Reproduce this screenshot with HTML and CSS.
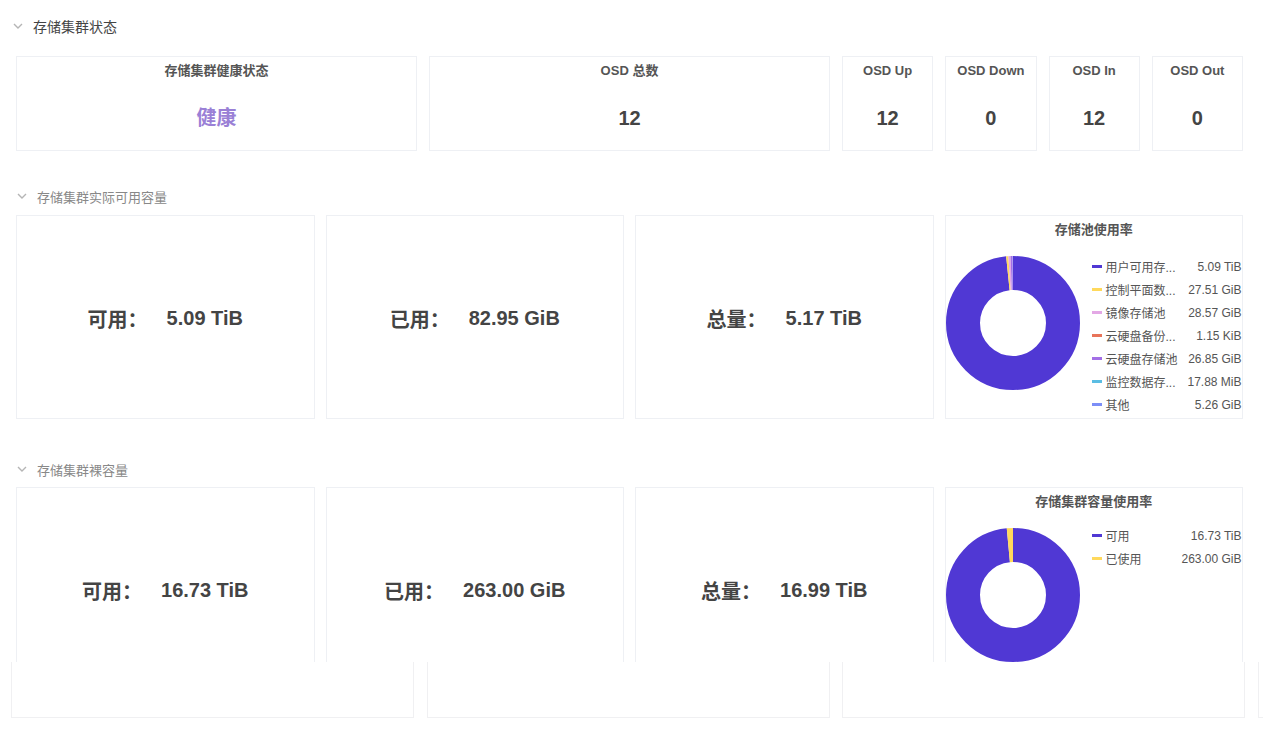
FILE: index.html
```html
<!DOCTYPE html>
<html lang="zh-CN">
<head>
    <meta charset="UTF-8">
    <meta name="viewport" content="width=device-width, initial-scale=1.0">
    <title>存储集群概览</title>
    <link rel="stylesheet" href="styles.css">
</head>
<body>
    <div class="page">
        <div class="section-title first">
            <svg class="chevron" width="10" height="6" viewBox="0 0 10 6"><polyline points="1,1 5,5 9,1" fill="none" stroke="#b5b5b5" stroke-width="1.4"/></svg>
            <span>存储集群状态</span>
        </div>
        <div class="status-row">
            <div class="card stat">
                <div class="stat-title">存储集群健康状态</div>
                <div class="stat-value health">健康</div>
            </div>
            <div class="card stat">
                <div class="stat-title">OSD 总数</div>
                <div class="stat-value">12</div>
            </div>
            <div class="card stat">
                <div class="stat-title">OSD Up</div>
                <div class="stat-value">12</div>
            </div>
            <div class="card stat">
                <div class="stat-title">OSD Down</div>
                <div class="stat-value">0</div>
            </div>
            <div class="card stat">
                <div class="stat-title">OSD In</div>
                <div class="stat-value">12</div>
            </div>
            <div class="card stat">
                <div class="stat-title">OSD Out</div>
                <div class="stat-value">0</div>
            </div>
        </div>

        <div class="section-title sub">
            <svg class="chevron" width="10" height="6" viewBox="0 0 10 6"><polyline points="1,1 5,5 9,1" fill="none" stroke="#b5b5b5" stroke-width="1.4"/></svg>
            <span>存储集群实际可用容量</span>
        </div>
        <div class="capacity-row">
            <div class="card capacity"><span class="cap-label">可用：</span><span class="cap-value">5.09 TiB</span></div>
            <div class="card capacity"><span class="cap-label">已用：</span><span class="cap-value">82.95 GiB</span></div>
            <div class="card capacity"><span class="cap-label">总量：</span><span class="cap-value">5.17 TiB</span></div>
            <div class="card chart">
                <div class="chart-title">存储池使用率</div>
                <div class="chart-body">
                    <svg class="donut" width="134" height="134" viewBox="0 0 134 134">
                        <g transform="rotate(-90 67 67)" fill="none" stroke-width="34">
                            <circle cx="67" cy="67" r="50" pathLength="100" stroke="#5038d4" stroke-dasharray="98.34 100"/>
                            <circle cx="67" cy="67" r="50" pathLength="100" stroke="#ffd95c" stroke-dasharray="0.52 100" stroke-dashoffset="-98.34"/>
                            <circle cx="67" cy="67" r="50" pathLength="100" stroke="#e3a8e5" stroke-dasharray="0.54 100" stroke-dashoffset="-98.86"/>
                            <circle cx="67" cy="67" r="50" pathLength="100" stroke="#a36fe6" stroke-dasharray="0.51 100" stroke-dashoffset="-99.40"/>
                            <circle cx="67" cy="67" r="50" pathLength="100" stroke="#7c8ef7" stroke-dasharray="0.09 100" stroke-dashoffset="-99.91"/>
                        </g>
                    </svg>
                    <ul class="legend">
                        <li><i style="background:#5038d4"></i><span class="name">用户可用存...</span><span class="num">5.09 TiB</span></li>
                        <li><i style="background:#ffd95c"></i><span class="name">控制平面数...</span><span class="num">27.51 GiB</span></li>
                        <li><i style="background:#e3a8e5"></i><span class="name">镜像存储池</span><span class="num">28.57 GiB</span></li>
                        <li><i style="background:#e8745a"></i><span class="name">云硬盘备份...</span><span class="num">1.15 KiB</span></li>
                        <li><i style="background:#a36fe6"></i><span class="name">云硬盘存储池</span><span class="num">26.85 GiB</span></li>
                        <li><i style="background:#5bbde3"></i><span class="name">监控数据存...</span><span class="num">17.88 MiB</span></li>
                        <li><i style="background:#7c8ef7"></i><span class="name">其他</span><span class="num">5.26 GiB</span></li>
                    </ul>
                </div>
            </div>
        </div>

        <div class="section-title sub raw">
            <svg class="chevron" width="10" height="6" viewBox="0 0 10 6"><polyline points="1,1 5,5 9,1" fill="none" stroke="#b5b5b5" stroke-width="1.4"/></svg>
            <span>存储集群裸容量</span>
        </div>
        <div class="raw-wrap">
            <div class="capacity-row">
                <div class="card capacity"><span class="cap-label">可用：</span><span class="cap-value">16.73 TiB</span></div>
                <div class="card capacity"><span class="cap-label">已用：</span><span class="cap-value">263.00 GiB</span></div>
                <div class="card capacity"><span class="cap-label">总量：</span><span class="cap-value">16.99 TiB</span></div>
                <div class="card chart">
                    <div class="chart-title">存储集群容量使用率</div>
                    <div class="chart-body">
                        <svg class="donut" width="134" height="134" viewBox="0 0 134 134">
                            <g transform="rotate(-90 67 67)" fill="none" stroke-width="34">
                                <circle cx="67" cy="67" r="50" pathLength="100" stroke="#5038d4" stroke-dasharray="98.49 100"/>
                                <circle cx="67" cy="67" r="50" pathLength="100" stroke="#ffd95c" stroke-dasharray="1.51 100" stroke-dashoffset="-98.49"/>
                            </g>
                        </svg>
                        <ul class="legend two">
                            <li><i style="background:#5038d4"></i><span class="name">可用</span><span class="num">16.73 TiB</span></li>
                            <li><i style="background:#ffd95c"></i><span class="name">已使用</span><span class="num">263.00 GiB</span></li>
                        </ul>
                    </div>
                </div>
            </div>
        </div>

        <div class="next-row">
            <div class="card blank"></div>
            <div class="card blank"></div>
            <div class="card blank"></div>
            <div class="card blank"></div>
        </div>
    </div>
</body>
</html>
```

FILE: styles.css
```css
html, body {
    overflow: hidden;
}
body {
    margin: 0;
    background-color: #fff;
    font-family: "Liberation Sans", "Noto Sans CJK SC", sans-serif;
    color: #444;
}
.page {
    width: 1227px;
    padding: 0 20px 0 16px;
}
.card {
    box-sizing: border-box;
    background-color: #fff;
    border: 1px solid #eef0f4;
}

.section-title {
    display: flex;
    align-items: center;
    height: 20px;
    font-size: 13px;
}
.section-title .chevron {
    margin-right: 10px;
}
.section-title.first {
    margin: 16px 0 20px -3px;
    font-size: 14px;
    color: #444;
}
.section-title.sub {
    margin: 35px 0 9px 1px;
    color: #888;
}
.section-title.raw {
    margin: 40px 0 8px 1px;
}

.status-row {
    display: grid;
    grid-template-columns: 401px 401px repeat(4, 1fr);
    gap: 12px;
}
.stat {
    height: 95px;
    text-align: center;
}
.stat-title {
    margin-top: 5px;
    line-height: 18px;
    font-size: 13px;
    font-weight: bold;
    color: #555;
}
.stat-value {
    margin-top: 26px;
    line-height: 24px;
    font-size: 20px;
    font-weight: bold;
    color: #444;
}
.stat-value.health {
    color: #9a80d6;
}

.capacity-row {
    display: grid;
    grid-template-columns: repeat(4, 1fr);
    gap: 11px;
}
.capacity {
    height: 204px;
    display: flex;
    align-items: center;
    justify-content: center;
    padding-top: 3px;
    font-size: 20px;
    font-weight: bold;
    color: #444;
}
.cap-value {
    margin-left: 19px;
}

.chart {
    height: 204px;
}
.chart-title {
    margin-top: 5px;
    line-height: 18px;
    text-align: center;
    font-size: 13px;
    font-weight: bold;
    color: #555;
}
.chart-body {
    display: flex;
    align-items: flex-start;
    margin-top: 16px;
}
.donut {
    display: block;
    margin-top: 1px;
}
.legend {
    list-style: none;
    margin: 0 0 0 12px;
    padding: 0;
    width: 150px;
    font-size: 12px;
    color: #555;
}
.legend.two {
    margin-top: -3px;
}
.legend li {
    display: flex;
    align-items: center;
    height: 23px;
}
.legend i {
    width: 10px;
    height: 3px;
    margin-right: 4px;
    flex: none;
}
.legend .name {
    white-space: nowrap;
}
.legend .num {
    flex: 1;
    text-align: right;
    white-space: nowrap;
}

.raw-wrap {
    height: 175px;
    overflow: hidden;
}

.next-row {
    display: flex;
    gap: 12.5px;
    margin-left: -5px;
    width: 1252px;
    overflow: hidden;
}
.blank {
    width: 403px;
    height: 56px;
    flex: none;
    border-top: none;
    border-color: #f0f0f2;
}
```
